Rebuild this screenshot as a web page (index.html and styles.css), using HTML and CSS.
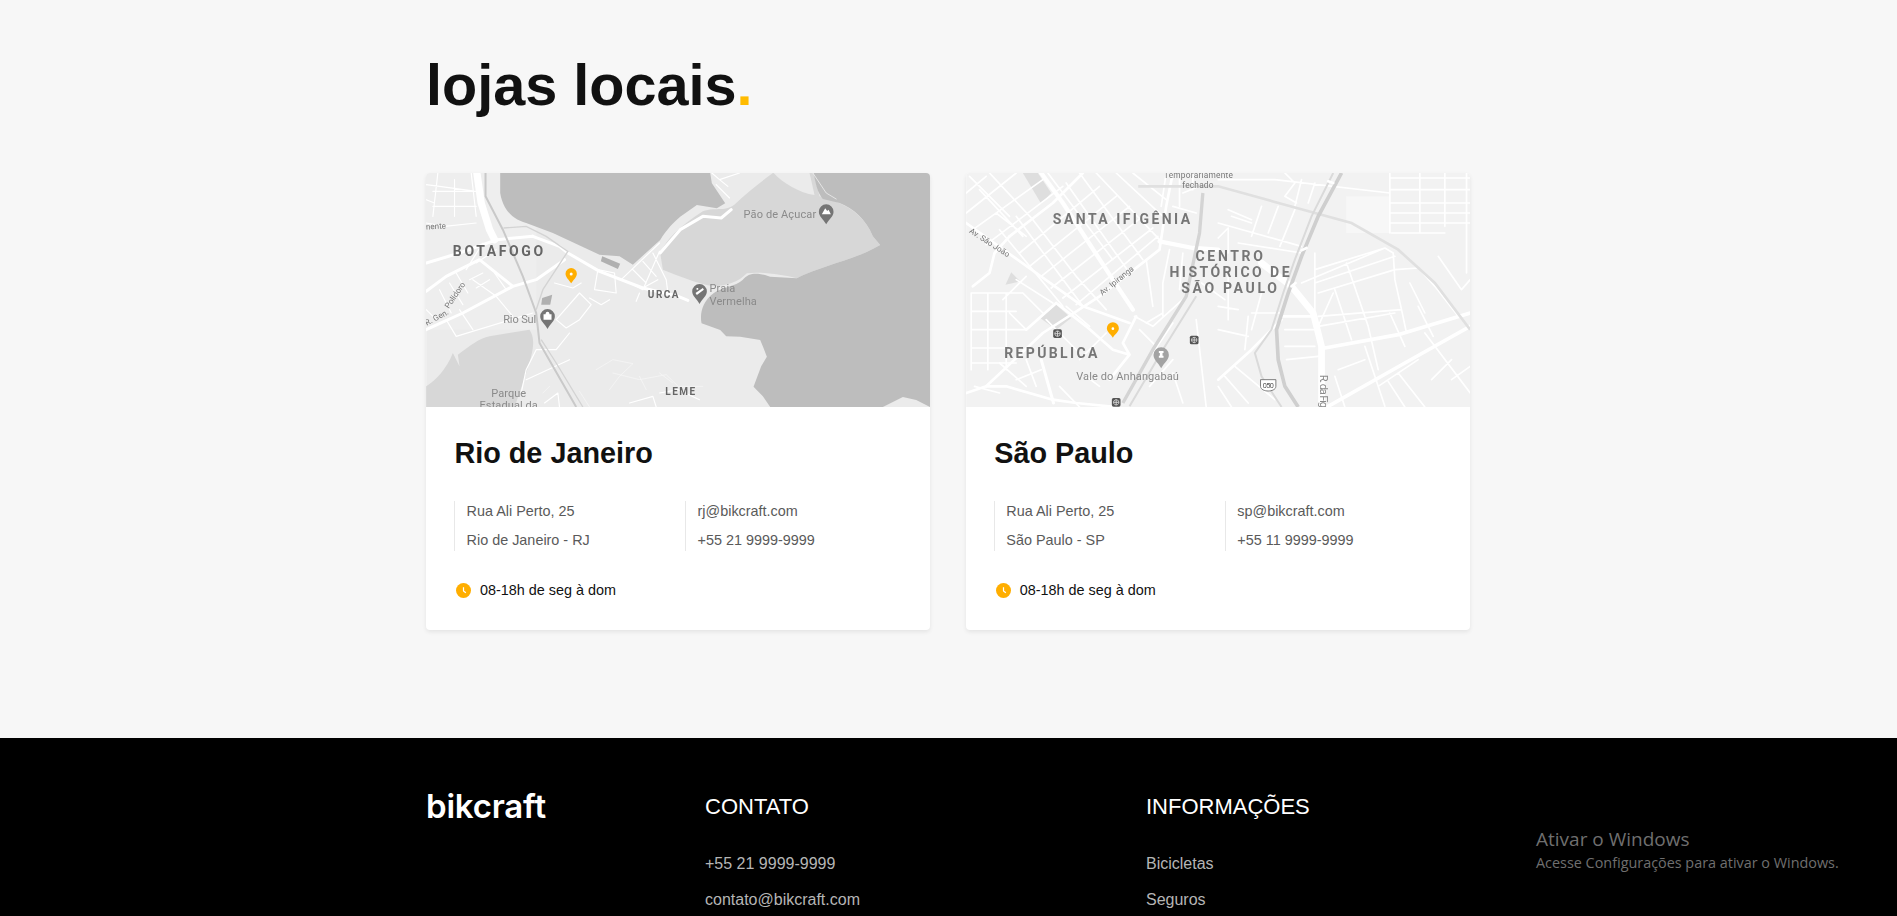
FILE: index.html
```html
<!DOCTYPE html>
<html lang="pt-BR">
<head>
<meta charset="utf-8">
<title>Lojas locais | Bikcraft</title>
<link rel="stylesheet" href="styles.css">
</head>
<body>
<main class="stores">
  <h1 class="stores-title">lojas locais<span class="dot">.</span></h1>
  <div class="store-grid">
    <article class="store">
      <svg class="map" viewBox="0 0 1512 702" role="img" aria-label="Mapa do Rio de Janeiro">
        <rect class="m1-land" width="1512" height="702"/>
        <rect class="m1-city" width="330" height="470"/>
        <path class="m1-park" d="M702,240C720,200 760,160 830,115 870,100 900,120 930,90 960,60 1000,30 1040,0H1162L1180,70 1230,86C1280,105 1320,140 1340,190L1362,216C1320,240 1280,255 1230,270 1190,285 1150,295 1112,316 1070,305 1000,295 962,301 940,325 900,340 860,340 810,330 760,310 710,290Z"/>
        <path class="m1-park" d="M0,640C30,620 60,590 80,540L100,580 95,545C130,520 160,495 190,490L310,470C330,500 320,540 300,600 290,630 280,660 265,702H0Z"/>
        <path class="m1-land" d="M1042,0C1070,30 1120,60 1165,66L1150,0Z"/>
        <path class="m1-water" d="M222,0V60C230,110 260,140 300,150L380,180 520,245 580,250 620,275 702,201C720,170 745,145 762,131L812,96 872,106 897,91 857,31 852,0Z"/>
        <path class="m1-water" d="M1162,0C1170,40 1175,60 1190,78L1240,90C1280,105 1320,140 1340,190L1362,216C1320,240 1280,255 1230,270 1190,285 1150,295 1112,316L1032,311C1000,300 970,295 950,320 930,340 880,345 862,361 830,385 820,420 826,451L882,471 900,490 942,491 1002,501 1012,525 1022,551 1005,580 982,641 1010,670 1032,702H1370L1430,672 1470,681 1512,702V0Z"/>
        <path class="m1-block" d="M528,250 582,272 575,288 524,265Z"/>
        <path class="m1-block" d="M348,375 378,365 372,395 345,395Z"/>
        <path class="m1-r1" d="M152,0 165,90 190,170 205,200"/>
        <path class="m1-r2" d="M0,270 100,240 212,200 320,190M320,190 400,220 425,240 520,295 650,345 756,370 785,382M0,355 60,310 160,260 260,340M0,470 110,420 260,340 330,320 415,260M702,240 762,170 830,130 885,135 915,110"/>
        <path class="m1-r3" d="M0,35 40,40 150,55M0,150 55,160 150,150M35,0 20,130M85,20V130M135,0 150,130M20,55H145M20,100H150M140,320 210,370 260,430M100,410 140,470M60,440 90,490 320,420M130,320 170,300M150,345 190,320M205,300 240,350M460,360 495,395 460,440 420,465 390,440ZM430,480 390,530 330,530 300,590 285,660M300,620 430,560M505,350 570,360 565,300 515,290ZM385,330 440,345 465,330M700,210 585,320 620,335 650,350 700,235M620,290 660,330M650,265 690,310M680,240 720,320 725,360M695,320 650,345M640,360 630,385M857,0 880,20 905,40M880,20 940,0M870,35 910,75M490,375 525,395 550,380M355,690 395,660 400,702M610,690 680,670 690,702M700,660 756,650 820,680M0,80 25,90M170,210 120,290M210,230 150,270M70,330 110,395M40,350 75,420M90,300 125,360M0,410 30,440"/>
        <path class="m1-r4" d="M510,590 560,560 620,572 580,610 550,650M560,600 640,620 720,605 756,640 830,640M640,610 660,650M460,655 490,702M700,600 740,630M350,660 370,640M1160,0 1200,60 1230,78"/>
        <path class="m1-h1" d="M178,0V70L230,170 290,310 330,420 340,510 380,580 450,702"/>
        <path class="m1-h2" d="M232,165 300,160 360,190 425,235 350,350 330,410M345,500 390,570 470,702"/>
        <path class="pin" d="M435,285a17,17 0 0 1 17,17c0,11-11,19-17,29c-6-10-17-18-17-29a17,17 0 0 1 17-17Z"/>
        <circle class="pin-dot" cx="435" cy="303" r="4.5"/>
        <path class="poi" d="M364,408a22,22 0 0 1 22,22c0,14-13,22-22,38c-9-16-22-24-22-38a22,22 0 0 1 22-22Z"/>
        <path class="poi-icon" d="M352,424h24v16h-24ZM358,424c0-10 12-10 12,0"/>
        <path class="poi" d="M820,333a22,22 0 0 1 22,22c0,14-13,22-22,38c-9-16-22-24-22-38a22,22 0 0 1 22-22Z"/>
        <path class="poi-icon" d="M808,360 830,345 833,350 812,366ZM811,345h5v5h-5Z"/>
        <path class="poi" d="M1200,94a22,22 0 0 1 22,22c0,14-13,22-22,38c-9-16-22-24-22-38a22,22 0 0 1 22-22Z"/>
        <path class="poi-icon" d="M1187,124 1197,106 1203,114 1207,110 1214,124Z"/>
        <text class="area lg" x="80" y="248" textLength="271">BOTAFOGO</text>
        <text class="area sm" x="665" y="375" textLength="92">URCA</text>
        <text class="area sm" x="717" y="665" textLength="90">LEME</text>
        <text class="place" x="231" y="450" textLength="99">Rio Sul</text>
        <text class="place" x="952" y="135" textLength="218">Pão de Açucar</text>
        <text class="place" x="850" y="358" textLength="77">Praia</text>
        <text class="place" x="850" y="395" textLength="142">Vermelha</text>
        <text class="place" x="195" y="672" textLength="105">Parque</text>
        <text class="place" x="160" y="708" textLength="175">Estadual da</text>
        <text class="street" transform="translate(-8 170) rotate(-3)">mente</text>
        <text class="street" transform="translate(2 458) rotate(-28)">R. Gen.</text>
        <text class="street" transform="translate(68 408) rotate(-56)">Polidoro</text>
      </svg>
      <div class="store-body">
        <h2 class="store-name">Rio de Janeiro</h2>
        <div class="store-info">
          <div class="info-col"><p>Rua Ali Perto, 25</p><p>Rio de Janeiro - RJ</p></div>
          <div class="info-col"><p>rj@bikcraft.com</p><p>+55 21 9999-9999</p></div>
        </div>
        <p class="hours">
          <svg class="clock" viewBox="0 0 16 16"><circle cx="8" cy="8" r="8"/><path d="M8 4.5V8.5L10.5 10.5"/></svg>
          08-18h de seg à dom
        </p>
      </div>
    </article>
    <article class="store">
      <svg class="map" viewBox="0 0 1512 702" role="img" aria-label="Mapa de São Paulo">
        <rect class="m2-land" width="1512" height="702"/>
        <path class="m2-park" d="M170,0H215L255,60 225,92Z"/>
        <path class="m2-park" d="M118,335 135,298 162,325Z"/>
        <path class="m2-park" d="M222,435 270,395 315,435 270,470Z"/>
        <rect class="m2-light" x="1140" y="70" width="130" height="110"/>
        <g class="m2-r3">
          <path d="M0,60 60,10M0,120 150,0M20,170 230,20M60,215 290,40M160,240 400,40M190,280 450,70M225,310 490,100M255,345 530,130M290,375 560,165M330,395 575,190M90,120 180,190M10,10 130,130M70,0 200,140 330,310 420,410M40,50 170,190M100,170 290,400M150,130 350,400M300,30 490,300M340,0 530,260M390,0 580,200M450,0 590,130M500,0 600,80M245,0 440,260"/>
          <path d="M15,360V590M65,360V590M120,360V590M15,360H170M15,415H150M15,470H175M15,525H120M15,570H150M170,360 230,420M130,420 180,470M150,320 260,390M110,380 180,310"/>
          <path d="M505,430 560,460 660,370M560,540 620,450M520,470 570,520M600,0 585,100M650,60 700,40M620,100 690,120M610,230 590,330 590,430M650,240 640,350M690,440 720,702M620,600 650,690M540,450 590,420M100,570 180,640M25,640 100,660M180,560 210,640M340,560 420,480M280,640 340,702M150,620 225,590M360,610 400,640M550,640 620,560M540,260 560,400M300,400 370,460M240,440 340,540M640,20 640,100M680,0V50"/>
        </g>
        <g class="m2-r2">
          <path d="M0,150 140,250 350,400 490,450M180,470 270,390M270,390 360,460 440,530 490,545 430,620M510,430 470,510 490,545M0,660 60,640 120,640 260,680 330,690 450,702M20,340 70,300 85,240 130,190"/>
          <path d="M60,640 230,480 400,370 580,230M130,190 260,90 350,0M580,230 600,100 620,0"/>
        </g>
        <path class="m2-r1" d="M225,0 290,90 440,320 500,410M580,205 680,225 756,230"/>
        <path class="m2-r4" d="M225,560 262,690"/>
        <path class="m2-h2" d="M710,60 700,180 660,370 560,530 470,690"/>
        <path class="m2-h3" d="M690,370 590,530 490,700"/>
        <g transform="translate(756 0)">
          <g class="m2-r3">
            <path d="M0,20 170,20 515,60M200,0 230,30 200,70 235,90M250,20 230,100M290,30 270,90M130,100 100,190M180,100 150,180M230,110 185,220M0,150 250,220M0,195 30,165V240M60,210 250,240M30,110 100,140M40,130 100,150M-50,330 20,380M250,330 500,225 525,240 530,320 550,410 565,480M290,290 500,225M290,330 530,250M300,360 530,290 600,285 650,340 720,430M300,430 550,410M385,270 450,460 480,590M350,350 400,500M300,460 530,420M290,240V450M345,360 300,460M30,290V440M100,420 185,420M90,430 80,530M515,0V180M605,0V180M680,0V160M745,0V300M515,15H756M515,50H756M515,90H756M515,120H756M515,150H756M520,180H680M660,250 730,350 756,320M440,520 500,700M540,600 620,702M620,480 756,660M360,590 440,560M350,610 380,702M600,400 645,490M515,420 560,520M575,330 620,420M50,580 170,680M20,610 90,690M0,640 40,702M510,625 560,702M700,620 756,580M480,640 600,560M640,620 700,560M130,360 100,470M0,470 90,490M0,400 60,410M200,470 285,470M200,520 290,520M205,560 300,550"/>
          </g>
          <path class="m2-r6" d="M130,270 220,340 285,420 310,520V702"/>
          <path class="m2-r7" d="M320,525 540,485 756,420M330,700 560,570 756,460"/>
          <path class="m2-r2b" d="M190,430H285M190,440 100,530 0,620"/>
          <path class="m2-curve" d="M-240,40 0,40 200,95 400,150 540,230 650,330 756,470"/>
          <path class="m2-h1" d="M370,0 300,130 250,250 210,360 175,470 180,560 200,640 240,702"/>
          <path class="m2-h3" d="M345,0 280,130 230,260 195,360 160,470 110,540 130,610 190,702"/>
          <path class="m2-r2b" d="M265,225 250,232M220,340 232,330M345,30 330,25"/>
          <path class="shield" d="M127,620H173V640C173,650 160,654 150,654C140,654 127,650 127,640Z"/>
          <text class="shield-text" x="134" y="644" textLength="33">050</text>
          <text class="place" transform="translate(305 605) rotate(90)" textLength="100">R. da Fig</text>
        </g>
        <path class="pin" d="M440,448a18,18 0 0 1 18,18c0,11-11,17-18,28c-7-11-18-17-18-28a18,18 0 0 1 18-18Z"/>
        <circle class="pin-dot" cx="440" cy="467" r="4"/>
        <path class="poi-light" d="M585,523a23,23 0 0 1 23,23c0,14-13,22-23,40c-10-18-23-26-23-40a23,23 0 0 1 23-23Z"/>
        <path class="poi-icon" d="M578,534h14v6h-3v8h3v6h-14v-6h3v-8h-3Z"/>
        <rect class="metro" x="261" y="469" width="26" height="26" rx="5"/>
        <path class="metro-mark" d="M274,474a8,8 0 1 1-.01,0ZM266,482H282M274,474V490"/>
        <rect class="metro" x="671" y="488" width="26" height="26" rx="5"/>
        <path class="metro-mark" d="M684,493a8,8 0 1 1-.01,0ZM676,501H692M684,493V509"/>
        <rect class="metro" x="437" y="675" width="26" height="26" rx="5"/>
        <path class="metro-mark" d="M450,680a8,8 0 1 1-.01,0ZM442,688H458M450,680V696"/>
        <text class="area lg soft" x="260" y="152" textLength="412">SANTA IFIGÊNIA</text>
        <text class="area lg soft" x="688" y="264" textLength="202">CENTRO</text>
        <text class="area lg soft" x="610" y="312" textLength="360">HISTÓRICO DE</text>
        <text class="area lg soft" x="645" y="361" textLength="287">SÃO PAULO</text>
        <text class="area lg soft" x="114" y="555" textLength="280">REPÚBLICA</text>
        <text class="place" x="330" y="620" textLength="308">Vale do Anhangabaú</text>
        <text class="tiny" x="593" y="14" textLength="207">Temporariamente</text>
        <text class="tiny" x="648" y="45" textLength="94">fechado</text>
        <text class="street" transform="translate(8 178) rotate(33)">Av. São João</text>
        <text class="street" transform="translate(408 368) rotate(-39)">Av. Ipiranga</text>
      </svg>
      <div class="store-body">
        <h2 class="store-name">São Paulo</h2>
        <div class="store-info">
          <div class="info-col"><p>Rua Ali Perto, 25</p><p>São Paulo - SP</p></div>
          <div class="info-col"><p>sp@bikcraft.com</p><p>+55 11 9999-9999</p></div>
        </div>
        <p class="hours">
          <svg class="clock" viewBox="0 0 16 16"><circle cx="8" cy="8" r="8"/><path d="M8 4.5V8.5L10.5 10.5"/></svg>
          08-18h de seg à dom
        </p>
      </div>
    </article>
  </div>
</main>
<footer class="footer">
  <div class="footer-inner">
    <a class="logo" href="#">bikcraft</a>
    <section class="footer-col">
      <h3 class="footer-title">CONTATO</h3>
      <ul class="footer-list"><li>+55 21 9999-9999</li><li>contato@bikcraft.com</li></ul>
    </section>
    <section class="footer-col">
      <h3 class="footer-title">INFORMAÇÕES</h3>
      <ul class="footer-list"><li>Bicicletas</li><li>Seguros</li></ul>
    </section>
  </div>
</footer>
<aside class="activate">
  <p class="activate-title">Ativar o Windows</p>
  <p class="activate-text">Acesse Configurações para ativar o Windows.</p>
</aside>
</body>
</html>
```
FILE: styles.css
```css
* { box-sizing: border-box; }
html, body { height: 100%; overflow: hidden; }
body {
  margin: 0;
  background: #f7f7f7;
  color: #111;
  font-family: "Liberation Sans", Arial, sans-serif;
}
p, h1, h2, h3, ul { margin: 0; padding: 0; }
ul { list-style: none; }

.stores {
  width: 1045px;
  margin: 0 auto;
  padding: 49px 0 108px;
}
.stores-title {
  font-size: 57.6px;
  line-height: 72px;
  font-weight: 700;
  margin-bottom: 52px;
}
.dot { color: #ffbb00; }
.store-grid {
  display: grid;
  grid-template-columns: 504.4px 504.4px;
  column-gap: 35.4px;
}
.store {
  background: #fff;
  border-radius: 4px;
  overflow: hidden;
  box-shadow: 0 2px 4px rgba(0, 0, 0, .08);
}
.store-body { padding: 28.8px 28.4px; }
.store-name {
  font-size: 28.8px;
  line-height: 1.2;
  font-weight: 700;
}
.store-info {
  display: grid;
  grid-template-columns: 231px 1fr;
  margin-top: 30.4px;
}
.info-col {
  display: grid;
  row-gap: 7.2px;
  padding-left: 11.2px;
  border-left: 1px solid #e8e8e8;
  font-size: 14.4px;
  line-height: 21.6px;
  color: #5a5a5a;
}
.hours {
  display: flex;
  align-items: center;
  gap: 9px;
  margin-top: 28.8px;
  margin-left: 1.6px;
  font-size: 14.4px;
  line-height: 21.6px;
  color: #111;
}
.clock { width: 15px; height: 15px; flex: none; }
.clock circle { fill: #ffae00; }
.clock path { fill: none; stroke: #fff; stroke-width: 1.3; }

.map { display: block; width: 100%; height: 234px; filter: blur(.5px); }
.map path { fill: none; }
.map text { font-family: Roboto, "Liberation Sans", sans-serif; }

.map .m1-land { fill: #ebebeb; }
.map .m1-city { fill: #eeeeee; }
.map .m1-park { fill: #d7d7d7; }
.map .m1-water { fill: #bdbdbd; }
.map .m1-block { fill: #b0b0b0; }
.map .m1-r1, .map .m1-r2, .map .m1-r3, .map .m1-r4,
.map .m2-r1, .map .m2-r2, .map .m2-r2b, .map .m2-r3 path, .map .m2-r4, .map .m2-r6, .map .m2-r7 {
  stroke: #fff; stroke-linecap: round; stroke-linejoin: round;
}
.map .m1-r1 { stroke-width: 22; }
.map .m1-r2 { stroke-width: 9; }
.map .m1-r3 { stroke-width: 3.5; }
.map .m1-r4 { stroke-width: 2; stroke: #f8f8f8; }
.map .m1-h1 { stroke: #c9c9c9; stroke-width: 6; }
.map .m1-h2 { stroke: #d3d3d3; stroke-width: 4; }

.map .m2-land { fill: #f2f2f2; }
.map .m2-park { fill: #dedede; }
.map .m2-light { fill: #f7f7f7; }
.map .m2-r1 { stroke-width: 13; }
.map .m2-r2 { stroke-width: 8; fill: none; }
.map .m2-r2b { stroke-width: 8; }
.map .m2-r3 path { stroke-width: 5; }
.map .m2-r4 { stroke-width: 9; }
.map .m2-r6 { stroke-width: 20; }
.map .m2-r7 { stroke-width: 11; }
.map .m2-curve { stroke: #e0e0e0; stroke-width: 8; }
.map .m2-h1 { stroke: #cfcfcf; stroke-width: 11; }
.map .m2-h2 { stroke: #d4d4d4; stroke-width: 10; }
.map .m2-h3 { stroke: #dadada; stroke-width: 6; }

.map .pin { fill: #ffae00; }
.map .pin-dot { fill: #fff; }
.map .poi { fill: #757575; }
.map .poi-light { fill: #a3a3a3; }
.map .poi-icon { fill: #fff; }
.map .metro { fill: #555; }
.map .metro-mark { stroke: #ddd; stroke-width: 2.5; }
.map .shield { fill: #fff; stroke: #666; stroke-width: 2.5; }
.map .shield-text { font-size: 22px; fill: #555; }
.map .area { font-weight: 700; fill: #666; }
.map .area.lg { font-size: 42px; }
.map .area.sm { font-size: 30px; }
.map .area.soft { fill: #767676; }
.map .place { font-size: 33px; fill: #8a8a8a; }
.map .tiny { font-size: 25px; fill: #777; }
.map .street { font-size: 24px; fill: #777; }

.footer { background: #000; padding-top: 48px; height: 300px; }
.footer-inner {
  width: 1045px;
  margin: 0 auto;
  display: grid;
  grid-template-columns: 279px 441px 1fr;
}
.logo {
  color: #fff;
  font-family: Inter, "Liberation Sans", sans-serif;
  font-size: 33px;
  font-weight: 600;
  line-height: 40px;
  letter-spacing: -.2px;
  text-decoration: none;
}
.footer-col { padding-top: 7.5px; }
.footer-title {
  color: #fff;
  font-size: 22px;
  line-height: 26px;
  font-weight: 400;
  margin-bottom: 32.6px;
}
.footer-list {
  display: grid;
  row-gap: 12px;
  color: #b5b5b5;
  font-size: 16px;
  line-height: 24px;
}
.activate {
  position: absolute;
  left: 1536px;
  top: 826px;
  color: #6f6f6f;
  font-family: "Open Sans", sans-serif;
}
.activate-title { font-size: 19px; line-height: 27px; }
.activate-text { font-size: 14.4px; line-height: 19px; }
```
